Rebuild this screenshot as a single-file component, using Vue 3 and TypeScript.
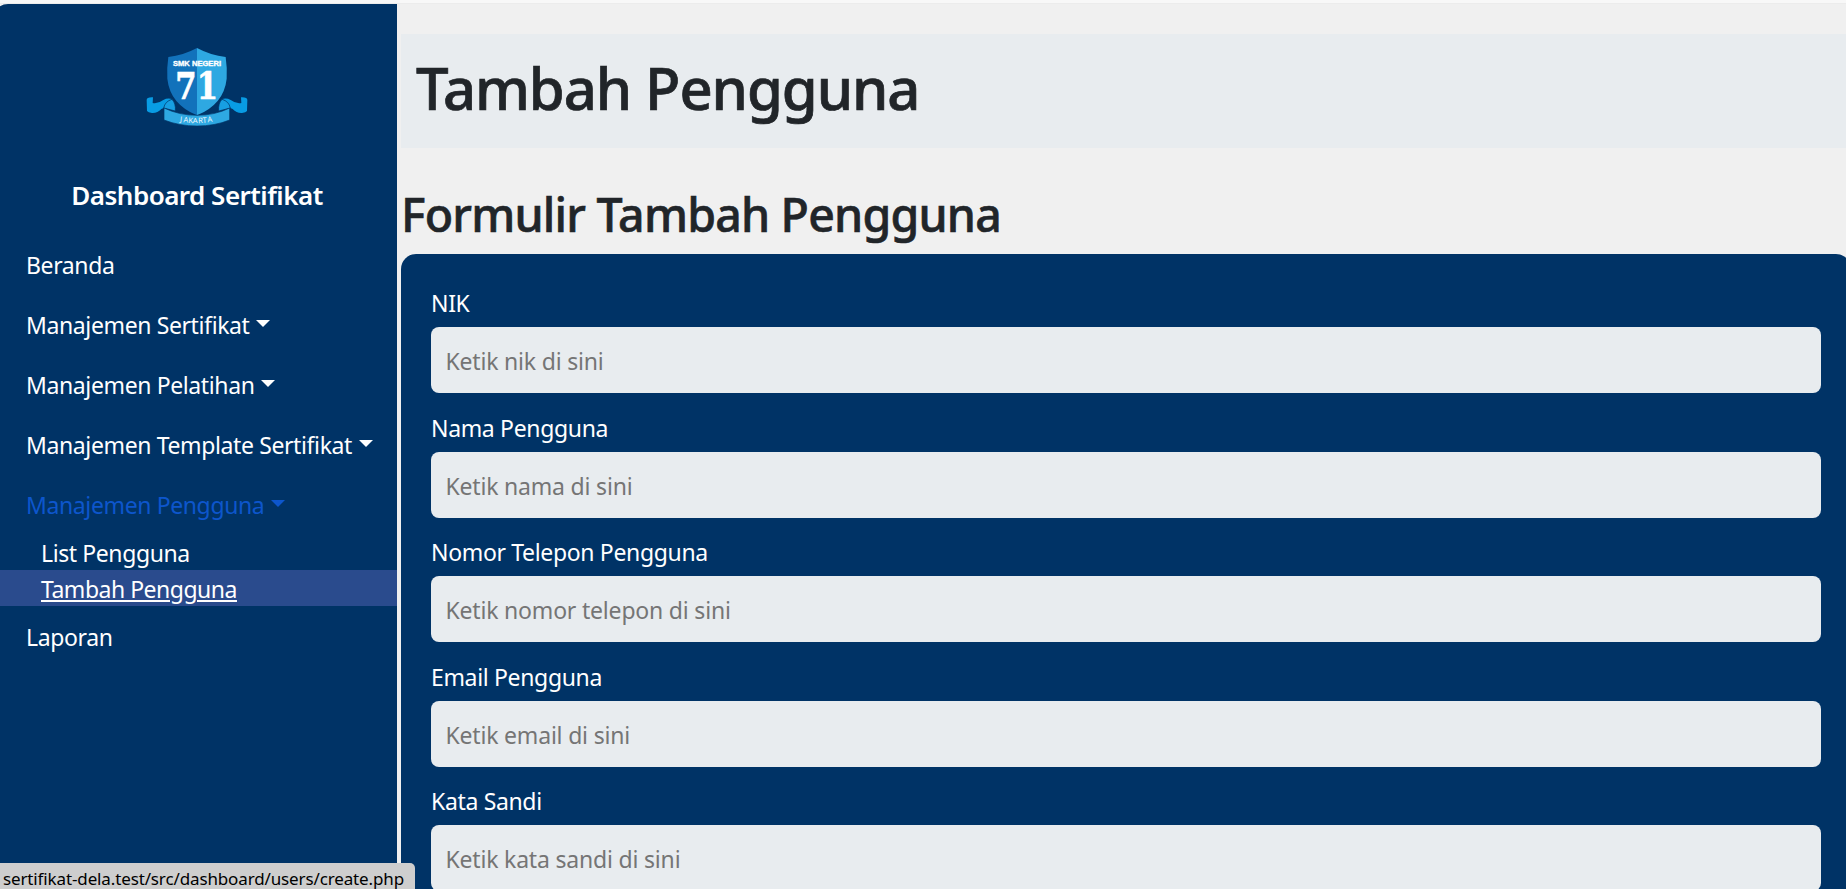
<script setup lang="ts">
import { ref } from 'vue'

interface SubItem {
  label: string
  current: boolean
}

interface NavItem {
  label: string
  dropdown: boolean
  active: boolean
  children: SubItem[]
}

interface Field {
  id: string
  label: string
  placeholder: string
  type: string
}

const navItems: NavItem[] = [
  { label: 'Beranda', dropdown: false, active: false, children: [] },
  { label: 'Manajemen Sertifikat', dropdown: true, active: false, children: [] },
  { label: 'Manajemen Pelatihan', dropdown: true, active: false, children: [] },
  { label: 'Manajemen Template Sertifikat', dropdown: true, active: false, children: [] },
  {
    label: 'Manajemen Pengguna',
    dropdown: true,
    active: true,
    children: [
      { label: 'List Pengguna', current: false },
      { label: 'Tambah Pengguna', current: true },
    ],
  },
  { label: 'Laporan', dropdown: false, active: false, children: [] },
]

const fields: Field[] = [
  { id: 'nik', label: 'NIK', placeholder: 'Ketik nik di sini', type: 'text' },
  { id: 'nama', label: 'Nama Pengguna', placeholder: 'Ketik nama di sini', type: 'text' },
  { id: 'telepon', label: 'Nomor Telepon Pengguna', placeholder: 'Ketik nomor telepon di sini', type: 'text' },
  { id: 'email', label: 'Email Pengguna', placeholder: 'Ketik email di sini', type: 'email' },
  { id: 'sandi', label: 'Kata Sandi', placeholder: 'Ketik kata sandi di sini', type: 'password' },
]

const values = ref<Record<string, string>>({ nik: '', nama: '', telepon: '', email: '', sandi: '' })
</script>

<template>
  <div class="page">
    <div class="topline"></div>
    <div class="layout">
      <aside class="sidebar">
        <svg class="logo" viewBox="0 0 390 330" role="img">
          <g fill="#089ce4">
            <path d="M50 210Q50 201 69 202L68 219Q84 222 100 210Q112 203 126 207Q106 217 101 234L94 237Q82 250 66 249Q54 248 51 243Z" />
            <path d="M352 210Q352 201 333 202L334 219Q318 222 302 210Q290 203 276 207Q296 217 301 234L308 237Q320 250 336 249Q348 248 351 243Z" />
          </g>
          <g fill="#179fe2" stroke="#003366" stroke-width="2">
            <path d="M101 234Q105 214 126 208Q138 221 136 243Z" />
            <path d="M301 234Q297 214 276 208Q264 221 266 243Z" />
          </g>
          <path d="M201 54Q160 76 115 81Q110 115 112 146Q120 222 201 256Z" fill="#1272bb" />
          <path d="M201 54Q242 76 287 81Q292 115 290 146Q282 222 201 256Z" fill="#2ea8e2" />
          <path d="M102 234Q148 256 201 256Q254 256 299 234V270Q254 288 201 288Q148 288 102 270Z" fill="#2ea8e2" stroke="#003366" stroke-width="2" />
          <text class="logo-school" x="201" y="108" textLength="144" lengthAdjust="spacingAndGlyphs">SMK NEGERI</text>
          <text class="logo-number" x="200" y="207" textLength="128" lengthAdjust="spacingAndGlyphs">71</text>
          <text class="logo-city" x="149 160 175 188 205 218 233" y="275 277 279 280 280 279 277" rotate="7 5 3 0 -2 -4 -7">JAKARTA</text>
        </svg>
        <h5 class="brand">Dashboard Sertifikat</h5>
        <nav class="nav">
          <template v-for="item in navItems" :key="item.label">
            <a class="nav-link" :class="{ active: item.active }">
              {{ item.label }}<span v-if="item.dropdown" class="caret"></span>
            </a>
            <div v-if="item.children.length" class="submenu">
              <a v-for="sub in item.children" :key="sub.label" class="sub-link" :class="{ current: sub.current }"><span>{{ sub.label }}</span></a>
            </div>
          </template>
        </nav>
      </aside>

      <main class="main">
        <header class="page-header">
          <h1>Tambah Pengguna</h1>
        </header>
        <h2>Formulir Tambah Pengguna</h2>
        <form class="card">
          <div v-for="f in fields" :key="f.id" class="field">
            <label :for="f.id">{{ f.label }}</label>
            <input :id="f.id" v-model="values[f.id]" :type="f.type" :placeholder="f.placeholder" />
          </div>
        </form>
      </main>
    </div>
    <div class="status">sertifikat-dela.test/src/dashboard/users/create.php</div>
  </div>
</template>

<style>
body {
  background: #f0f0f0;
  overflow: hidden;
}
</style>

<style scoped>
.page {
  position: relative;
  display: flex;
  flex-direction: column;
  width: 100%;
  height: 100vh;
  overflow: hidden;
  box-sizing: border-box;
  background: #f0f0f0;
  color: #212529;
  font-family: "Noto Sans", "Open Sans", sans-serif;
  font-size: 23px;
}

.topline {
  flex: none;
  height: 3px;
  background: #f8f8f8;
  border-bottom: 1px solid #ececec;
}

.layout {
  display: flex;
  flex: 1;
  min-height: 0;
}

.sidebar {
  display: flex;
  flex: none;
  flex-direction: column;
  box-sizing: border-box;
  width: 404px;
  margin-left: -7px;
  padding-left: 7px;
  background: #003366;
  border-radius: 15px 0 0 0;
  color: #fff;
}

.logo {
  flex: none;
  width: 130px;
  height: 110px;
  margin: 26px 0 0 130px;
}

.logo-school {
  fill: #fff;
  font: bold 20px "Liberation Sans", sans-serif;
  text-anchor: middle;
  stroke: #fff;
  stroke-width: 1;
}

.logo-number {
  fill: #fff;
  stroke: #fff;
  stroke-width: 2;
  font: bold 112px "DejaVu Serif", serif;
  text-anchor: middle;
}

.logo-city {
  fill: #e9f6fd;
  font: 23px "Noto Sans", sans-serif;
}

.brand {
  margin: 37px 0 0;
  padding-right: 3px;
  height: 57px;
  line-height: 36px;
  font-size: 26px;
  font-weight: 600;
  letter-spacing: -0.52px;
  text-align: center;
}

.nav {
  display: flex;
  flex-direction: column;
}

.nav-link {
  display: flex;
  padding: 14px 0 12px 26px;
  line-height: 34px;
  letter-spacing: -0.38px;
  white-space: nowrap;
}

.nav-link.active {
  color: #0d56cc;
}

.caret {
  width: 0;
  height: 0;
  margin: 12px 0 0 6.5px;
  border-top: 7px solid currentColor;
  border-left: 7px solid transparent;
  border-right: 7px solid transparent;
}

.submenu {
  display: flex;
  flex-direction: column;
}

.sub-link {
  padding: 2px 0 0 41px;
  line-height: 34px;
  letter-spacing: -0.4px;
}

.sub-link.current {
  background: #2a4b8d;
}

.sub-link.current span {
  text-decoration: underline;
  text-decoration-thickness: 2px;
  text-underline-offset: 2px;
  letter-spacing: -0.49px;
}

.main {
  flex: none;
  width: 1450px;
  margin-left: 4px;
  padding-top: 30px;
  box-sizing: border-box;
}

.page-header {
  box-sizing: border-box;
  height: 114px;
  padding: 15px 15px 0;
  background: #e8ecef;
}

h1 {
  margin: 0;
  line-height: 77px;
  font-size: 58px;
  font-weight: 500;
  letter-spacing: -1.08px;
  -webkit-text-stroke: 0.7px currentColor;
}

h2 {
  margin: 38px 0 0;
  height: 68px;
  line-height: 56px;
  font-size: 46.5px;
  font-weight: 500;
  letter-spacing: -0.8px;
  -webkit-text-stroke: 0.6px currentColor;
}

.card {
  box-sizing: border-box;
  padding: 30px;
  height: 760px;
  background: #003366;
  border-radius: 15px;
}

.field {
  display: flex;
  flex-direction: column;
  margin-bottom: 15.5px;
}

label {
  padding-top: 2px;
  margin-bottom: 7px;
  line-height: 34px;
  color: #fff;
  letter-spacing: -0.34px;
}

input {
  box-sizing: border-box;
  height: 66px;
  padding: 2px 15px 0 14.5px;
  border: 0;
  border-radius: 8px;
  background: #e8ecef;
  color: #212529;
  font-family: inherit;
  font-size: 23px;
  letter-spacing: -0.19px;
}

input::placeholder {
  color: #757575;
  opacity: 1;
}

.status {
  position: absolute;
  left: 0;
  bottom: 0;
  box-sizing: border-box;
  width: 415px;
  height: 26px;
  padding: 4px 0 0 3px;
  border-radius: 0 5px 0 0;
  background: #cecece;
  color: #000;
  font-size: 17px;
  line-height: 24px;
  letter-spacing: -0.13px;
  white-space: nowrap;
}
</style>
